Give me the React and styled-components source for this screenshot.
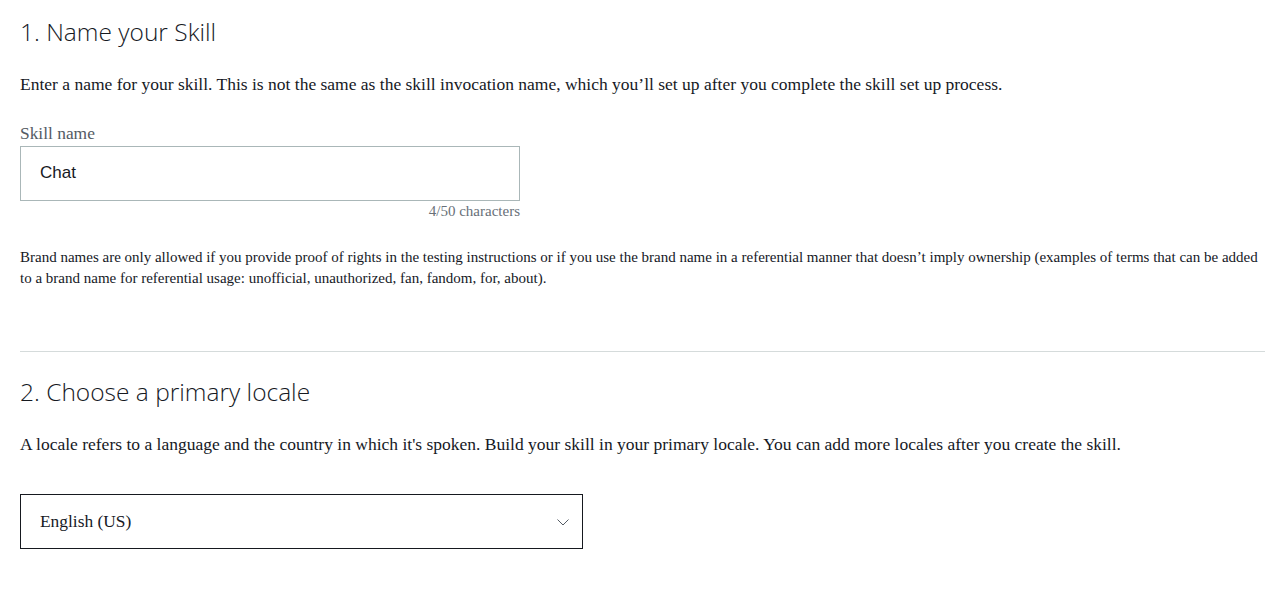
import React from 'react'
import styled, { createGlobalStyle } from 'styled-components'

const GlobalStyle = createGlobalStyle`
    body {
        margin: 0;
        background: #fff;
        font-family: "Liberation Serif", serif;
        color: #16191f;
    }
`;

const Page = styled.div`
    padding: 0 0 40px 20px;
`;

const Section = styled.section`
    padding-top: ${p => p.first ? '15px' : '23px'};
    padding-bottom: ${p => p.divided ? '62px' : '0'};
    border-bottom: ${p => p.divided ? '1px solid #d5dbdb' : 'none'};
`;

const Heading = styled.h2`
    margin: 0 0 23px;
    font-family: "Open Sans", sans-serif;
    font-weight: 300;
    font-size: 24.5px;
    line-height: 34px;
    color: #16191f;
`;

const Text = styled.p`
    margin: 0 0 ${p => p.gap || 0}px;
    padding-right: 7px;
    font-size: ${p => p.small ? '15px' : '17.5px'};
    line-height: ${p => p.small ? '21px' : '24px'};
    color: #16191f;
`;

const Field = styled.div`
    width: 500px;
    margin-bottom: 26px;
`;

const Label = styled.label`
    display: block;
    font-size: 17.4px;
    line-height: 22px;
    color: #545b64;
    margin-bottom: 2px;
`;

const Input = styled.div`
    box-sizing: border-box;
    height: 55px;
    border: 1px solid #aab7b8;
    padding: 0 19px 1px;
    display: flex;
    align-items: center;
    font-family: "Liberation Sans", sans-serif;
    font-size: 17px;
    color: #16191f;
`;

const Counter = styled.div`
    text-align: right;
    font-size: 15px;
    line-height: 20px;
    color: #687078;
`;

const Select = styled.div`
    box-sizing: border-box;
    width: 563px;
    height: 55px;
    margin-top: 38px;
    border: 1px solid #16191f;
    padding: 0 12px 0 19px;
    display: flex;
    align-items: center;
    justify-content: space-between;
    font-size: 17.4px;
    color: #16191f;
`;

const Chevron = () => (
    <svg width="14" height="14" viewBox="0 0 14 14" fill="none">
        <path d="M1.5 4.5 L7 10 L12.5 4.5" stroke="#545b64" strokeWidth="1" />
    </svg>
);

const App = () => (
    <Page>
        <GlobalStyle />
        <Section first divided>
            <Heading>1. Name your Skill</Heading>
            <Text gap={26}>
                Enter a name for your skill. This is not the same as the skill invocation name, which you’ll set up after you complete the skill set up process.
            </Text>
            <Field>
                <Label>Skill name</Label>
                <Input>Chat</Input>
                <Counter>4/50 characters</Counter>
            </Field>
            <Text small>
                Brand names are only allowed if you provide proof of rights in the testing instructions or if you use the brand name in a referential manner that doesn’t imply ownership (examples of terms that can be added to a brand name for referential usage: unofficial, unauthorized, fan, fandom, for, about).
            </Text>
        </Section>
        <Section>
            <Heading>2. Choose a primary locale</Heading>
            <Text>
                A locale refers to a language and the country in which it's spoken. Build your skill in your primary locale. You can add more locales after you create the skill.
            </Text>
            <Select>
                English (US)
                <Chevron />
            </Select>
        </Section>
    </Page>
);

export default App;
